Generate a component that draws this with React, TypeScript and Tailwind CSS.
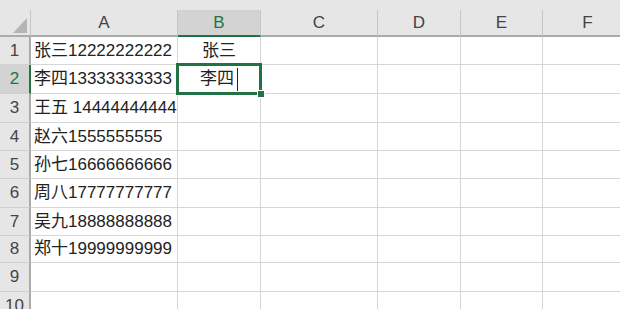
import React from "react";

const cols = [
  { key: "A", w: 147 },
  { key: "B", w: 83 },
  { key: "C", w: 117 },
  { key: "D", w: 83 },
  { key: "E", w: 82 },
  { key: "F", w: 90 },
];

const rowHeights = [28, 29, 29, 28, 28, 29, 28, 27, 29, 28];

const colA = [
  "张三12222222222",
  "李四13333333333",
  "王五 14444444444",
  "赵六1555555555",
  "孙七16666666666",
  "周八17777777777",
  "吴九18888888888",
  "郑十19999999999",
];

const font = { fontFamily: '"Liberation Sans", "Noto Sans CJK SC", sans-serif' };

export default function App() {
  return (
    <div className="w-[620px] h-[309px] overflow-hidden bg-white text-[#222]" style={font}>
      <div className="h-[10px] bg-[#e6e6e6]" />
      {/* column header */}
      <div className="flex h-[27px] bg-[#e6e6e6] text-[17px] text-[#444]">
        <div className="relative w-[31px] shrink-0 border-r border-[#c6c6c6] border-b-2 border-b-[#ababab]">
          <svg className="absolute left-[13px] top-[8px]" width="14" height="15" viewBox="0 0 14 15">
            <polygon points="0,15 14,15 14,0" fill="#b5b5b5" />
          </svg>
        </div>
        {cols.map((c) => (
          <div
            key={c.key}
            style={{ width: c.w }}
            className={`shrink-0 flex items-center justify-center border-r border-[#c6c6c6] border-b-2 ${
              c.key === "B" ? "bg-[#d3d3d3] border-b-[#217346] text-[#217346]" : "border-b-[#ababab]"
            }`}
          >
            {c.key}
          </div>
        ))}
      </div>
      {/* rows */}
      {rowHeights.map((h, i) => {
        const r = i + 1;
        const active = r === 2;
        return (
          <div key={r} className="flex text-[17px]" style={{ height: h }}>
            <div
              className={`w-[31px] shrink-0 flex items-center justify-center border-b border-[#d0d0d0] ${
                active
                  ? "bg-[#d3d3d3] text-[#217346] border-r-2 border-r-[#217346]"
                  : "bg-[#e6e6e6] text-[#444] border-r-2 border-r-[#ababab]"
              }`}
            >
              {r}
            </div>
            {cols.map((c) => {
              let content: React.ReactNode = null;
              if (c.key === "A" && colA[i]) content = <span className="pl-[3px]">{colA[i]}</span>;
              if (c.key === "B" && r === 1) content = "张三";
              if (c.key === "B" && r === 2)
                content = (
                  <span className="flex items-center">
                    李四
                    <span className="ml-[3px] w-px h-[23px] bg-[#222]" />
                  </span>
                );
              return (
                <div
                  key={c.key}
                  style={{ width: c.w }}
                  className={`relative shrink-0 flex items-center border-r border-b border-[#d6d6d6] whitespace-nowrap ${
                    c.key === "B" ? "justify-center" : ""
                  } ${c.key === "B" && active ? "z-10" : ""}`}
                >
                  {content}
                  {c.key === "B" && active && (
                    <div className="absolute -left-[2px] -top-[2px] w-[86px] h-[32px] border-[3px] border-[#217346] pointer-events-none">
                      <div className="absolute -right-[6px] -bottom-[6px] w-[8px] h-[8px] bg-[#217346] border border-white" />
                    </div>
                  )}
                </div>
              );
            })}
          </div>
        );
      })}
    </div>
  );
}
